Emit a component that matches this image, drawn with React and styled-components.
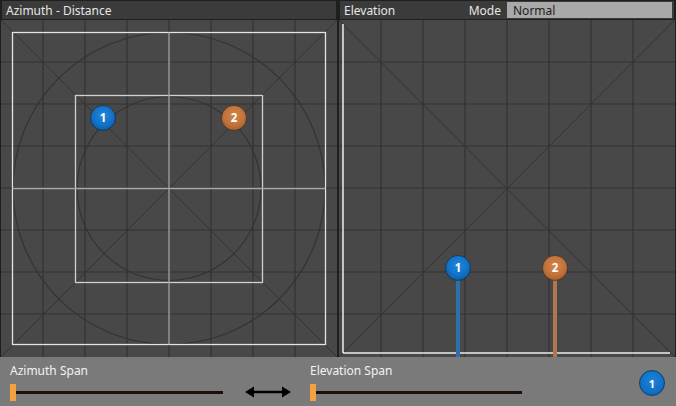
import React from "react";
import styled, { createGlobalStyle } from "styled-components";

const Global = createGlobalStyle`
  html, body { margin: 0; padding: 0; background: #1f1f1f; }
  body { font-family: "Noto Sans", "Open Sans", sans-serif; }
`;

const Page = styled.div`
  width: 676px;
  height: 406px;
  background: #1f1f1f;
  display: flex;
  flex-direction: column;
  overflow: hidden;
`;

const TopRow = styled.div`
  display: flex;
  gap: 2px;
  height: 357px;
  padding-left: 1px;
`;

const Panel = styled.div`
  width: ${(p) => p.$w}px;
  display: flex;
  flex-direction: column;
`;

const Header = styled.div`
  height: 18px;
  margin: 1px;
  background: #3b3b3b;
  display: flex;
  align-items: center;
  padding-left: 4px;
  color: #e6e6e6;
  font-size: 12px;
  box-sizing: border-box;
`;

const Spacer = styled.div`
  flex: 1;
`;

const ModeLabel = styled.span`
  color: #e6e6e6;
  font-size: 12px;
  margin-right: 6px;
`;

const ModeSelect = styled.div`
  width: 165px;
  height: 16px;
  background: #a9a9a9;
  color: #1e1e1e;
  font-size: 12px;
  display: flex;
  align-items: center;
  padding-left: 6px;
  box-sizing: border-box;
  margin-right: 2px;
`;

const Canvas = styled.svg`
  display: block;
  width: 336px;
  height: 337px;
  background: #484848;
`;

const BottomBar = styled.div`
  flex: 1;
  background: #7a7a7a;
  display: flex;
  align-items: flex-start;
  padding: 6px 10px 0 10px;
`;

const SliderGroup = styled.div`
  display: flex;
  flex-direction: column;
  width: ${(p) => p.$w}px;
`;

const SliderLabel = styled.div`
  color: #f2f2f2;
  font-size: 12px;
  height: 16px;
  line-height: 16px;
`;

const SliderTrack = styled.div`
  display: flex;
  align-items: center;
  height: 18px;
  margin-top: 4px;
`;

const Handle = styled.div`
  width: 6px;
  height: 17px;
  background: #f3a23f;
`;

const Track = styled.div`
  width: ${(p) => p.$w}px;
  height: 3px;
  background: #1b100b;
`;

const ArrowBox = styled.div`
  width: 75px;
  height: 44px;
  display: flex;
  align-items: flex-end;
  padding: 0 0 9px 10px;
  box-sizing: border-box;
`;

const Badge = styled.div`
  margin-left: auto;
  margin-top: 7px;
  margin-right: 1px;
  width: 24px;
  height: 24px;
  border-radius: 50%;
  background: radial-gradient(circle at 50% 40%, #1c84d8 0%, #1170c4 60%, #0b5aa3 100%);
  border: 1px solid #0b3f70;
  color: #fff;
  font-size: 11px;
  font-weight: 700;
  display: flex;
  align-items: center;
  justify-content: center;
`;

const GRID = "#333333";

function Grid() {
  const lines = [];
  for (let i = 1; i < 8; i++) {
    lines.push(<line key={"v" + i} x1={i * 42} y1={0} x2={i * 42} y2={337} stroke={GRID} strokeWidth="1.2" />);
    lines.push(<line key={"h" + i} x1={0} y1={i * 42} x2={336} y2={i * 42} stroke={GRID} strokeWidth="1.2" />);
  }
  lines.push(<line key="d1" x1={0} y1={0} x2={336} y2={337} stroke={GRID} strokeWidth="1" />);
  lines.push(<line key="d2" x1={336} y1={0} x2={0} y2={337} stroke={GRID} strokeWidth="1" />);
  return <g>{lines}</g>;
}

function Dot({ cx, cy, n, color }) {
  const id = "g" + color + n;
  const stops =
    color === "blue"
      ? ["#2088dc", "#1272c6", "#0c5ba4"]
      : ["#d48548", "#c2733c", "#a55e2f"];
  return (
    <g>
      <defs>
        <radialGradient id={id} cx="50%" cy="40%" r="60%">
          <stop offset="0%" stopColor={stops[0]} />
          <stop offset="65%" stopColor={stops[1]} />
          <stop offset="100%" stopColor={stops[2]} />
        </radialGradient>
      </defs>
      <circle cx={cx} cy={cy} r="12.5" fill={`url(#${id})`} stroke="rgba(0,0,0,0.35)" strokeWidth="1" />
      <text
        x={cx}
        y={cy + 4}
        textAnchor="middle"
        fill="#ffffff"
        fontSize="11.5"
        fontWeight="700"
        fontFamily="Noto Sans, sans-serif"
      >
        {n}
      </text>
    </g>
  );
}

function AzimuthCanvas() {
  const c = 168;
  const cy = 168.5;
  return (
    <Canvas viewBox="0 0 336 337">
      <Grid />
      <circle cx={c} cy={cy} r="156" fill="none" stroke="#333" strokeWidth="1.2" />
      <circle cx={c} cy={cy} r="92" fill="none" stroke="#333" strokeWidth="1.2" />
      <rect x={11.5} y={12.5} width={313} height={312} fill="none" stroke="#e4e4e4" strokeWidth="1.3" />
      <rect x={74.5} y={75.5} width={187} height={187} fill="none" stroke="#d0d0d0" strokeWidth="1.3" />
      <line x1={c} y1={12.5} x2={c} y2={324.5} stroke="#a8a8a8" strokeWidth="1.3" />
      <line x1={11.5} y1={cy} x2={324.5} y2={cy} stroke="#a8a8a8" strokeWidth="1.3" />
      <Dot cx={102} cy={98} n="1" color="blue" />
      <Dot cx={233} cy={98} n="2" color="orange" />
    </Canvas>
  );
}

function ElevationCanvas() {
  return (
    <Canvas viewBox="0 0 336 337">
      <Grid />
      <line x1={4} y1={4} x2={4} y2={333} stroke="#ececec" strokeWidth="1.5" />
      <line x1={4} y1={333} x2={331} y2={333} stroke="#ececec" strokeWidth="1.5" />
      <line x1={119} y1={248} x2={119} y2={337} stroke="#2f6fab" strokeWidth="4" />
      <line x1={216} y1={248} x2={216} y2={337} stroke="#b07650" strokeWidth="4" />
      <Dot cx={119} cy={248} n="1" color="blue" />
      <Dot cx={216} cy={248} n="2" color="orange" />
    </Canvas>
  );
}

function DoubleArrow() {
  return (
    <svg width="46" height="12" viewBox="0 0 46 12">
      <line x1="6" y1="6" x2="40" y2="6" stroke="#000" strokeWidth="2.5" />
      <polygon points="0,6 9,0.5 9,11.5" fill="#000" />
      <polygon points="46,6 37,0.5 37,11.5" fill="#000" />
    </svg>
  );
}

export default function App() {
  return (
    <Page>
      <Global />
      <TopRow>
        <Panel $w={336}>
          <Header>Azimuth - Distance</Header>
          <AzimuthCanvas />
        </Panel>
        <Panel $w={336}>
          <Header>
            Elevation
            <Spacer />
            <ModeLabel>Mode</ModeLabel>
            <ModeSelect>Normal</ModeSelect>
          </Header>
          <ElevationCanvas />
        </Panel>
      </TopRow>
      <BottomBar>
        <SliderGroup $w={225}>
          <SliderLabel>Azimuth Span</SliderLabel>
          <SliderTrack>
            <Handle />
            <Track $w={207} />
          </SliderTrack>
        </SliderGroup>
        <ArrowBox>
          <DoubleArrow />
        </ArrowBox>
        <SliderGroup $w={225}>
          <SliderLabel>Elevation Span</SliderLabel>
          <SliderTrack>
            <Handle />
            <Track $w={206} />
          </SliderTrack>
        </SliderGroup>
        <Badge>1</Badge>
      </BottomBar>
    </Page>
  );
}
